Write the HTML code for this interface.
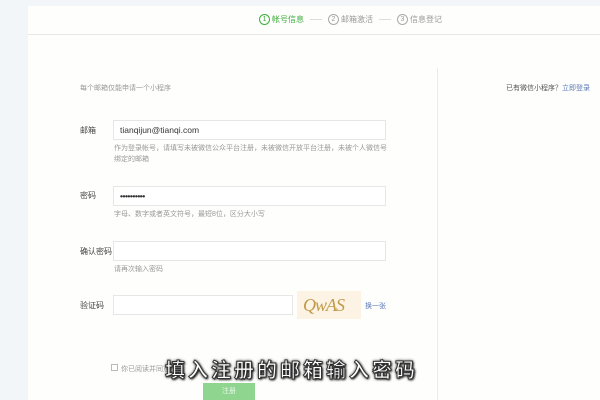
<!DOCTYPE html>
<html><head><meta charset="utf-8"><style>
*{margin:0;padding:0;box-sizing:border-box}
body{width:600px;height:400px;overflow:hidden;background:#f3f6f9;font-family:"Liberation Sans","Noto Sans CJK SC",sans-serif;position:relative}
.card{position:absolute;left:28px;top:6px;width:572px;height:394px;background:#fefefc}
.hdr{position:absolute;left:28px;top:34px;width:572px;height:1px;background:#e8e8e8}
.steps{position:absolute;top:14px;left:259px;font-size:8px;color:#999;white-space:nowrap}
.steps span.c{display:inline-block;width:11px;height:11px;border:1px solid #aaa;border-radius:50%;font-size:7px;line-height:9px;text-align:center;margin-right:2px;vertical-align:middle}
.steps .on{color:#3cae3c}.steps .on span.c{border-color:#3cae3c}
.dash{display:inline-block;width:12px;height:1px;background:#ddd;vertical-align:middle;margin:0 6px}
.vl{position:absolute;left:437px;top:68px;width:1px;height:332px;background:#ececec}
.t{position:absolute;font-size:7px;color:#999;white-space:nowrap}
.lbl{position:absolute;font-size:8px;color:#444;left:80px}
.in{position:absolute;left:113px;width:273px;height:20px;border:1px solid #e6e6e6;background:#fff;font-size:8.5px;color:#333;padding:0 6px;line-height:18px}
.help{position:absolute;left:114px;font-size:7px;color:#999;line-height:11px}
.cap{position:absolute;left:297px;top:291px;width:64px;height:28px;background:#fdf3e4;font-family:"Liberation Serif",serif;font-style:italic;font-size:18px;color:#c09a48;line-height:28px;padding-left:6px;letter-spacing:-1px}
.btn{position:absolute;left:203px;top:383px;width:52px;height:17px;background:#8fd48f;color:#e8f7e8;font-size:7px;text-align:center;line-height:17px}
.sub{position:absolute;left:165px;top:354px;font-size:20px;font-weight:bold;color:#fff;letter-spacing:3px;-webkit-text-stroke:1px #333;text-shadow:0 0 3px #000,1px 1px 2px #000;white-space:nowrap}
</style></head><body>
<div class="card"></div><div class="hdr"></div>
<div class="steps"><span class="on"><span class="c">1</span>帐号信息</span><span class="dash"></span><span><span class="c">2</span>邮箱激活</span><span class="dash"></span><span><span class="c">3</span>信息登记</span></div>
<div class="vl"></div>
<div class="t" style="left:80px;top:83px">每个邮箱仅能申请一个小程序</div>
<div class="t" style="left:506px;top:83px;color:#555">已有微信小程序？<span style="color:#5a7ab8">立即登录</span></div>
<div class="lbl" style="top:125px">邮箱</div>
<div class="in" style="top:120px">tianqijun@tianqi.com</div>
<div class="help" style="top:143px">作为登录帐号，请填写未被微信公众平台注册，未被微信开放平台注册，未被个人微信号<br>绑定的邮箱</div>
<div class="lbl" style="top:190px">密码</div>
<div class="in" style="top:186px;font-weight:bold;letter-spacing:-0.5px">••••••••••</div>
<div class="help" style="top:209px">字母、数字或者英文符号，最短8位，区分大小写</div>
<div class="lbl" style="top:246px">确认密码</div>
<div class="in" style="top:241px"></div>
<div class="help" style="top:264px">请再次输入密码</div>
<div class="lbl" style="top:300px">验证码</div>
<div class="in" style="top:295px;width:180px"></div>
<div class="cap">QwAS</div>
<div class="t" style="left:365px;top:301px;color:#5a7ab8">换一张</div>
<div style="position:absolute;left:111px;top:364px;width:7px;height:7px;border:1px solid #bbb;background:#fff"></div>
<div class="t" style="left:121px;top:364px">你已阅读并同意</div>
<div class="btn">注册</div>
<div class="sub">填入注册的邮箱输入密码</div>
</body></html>
